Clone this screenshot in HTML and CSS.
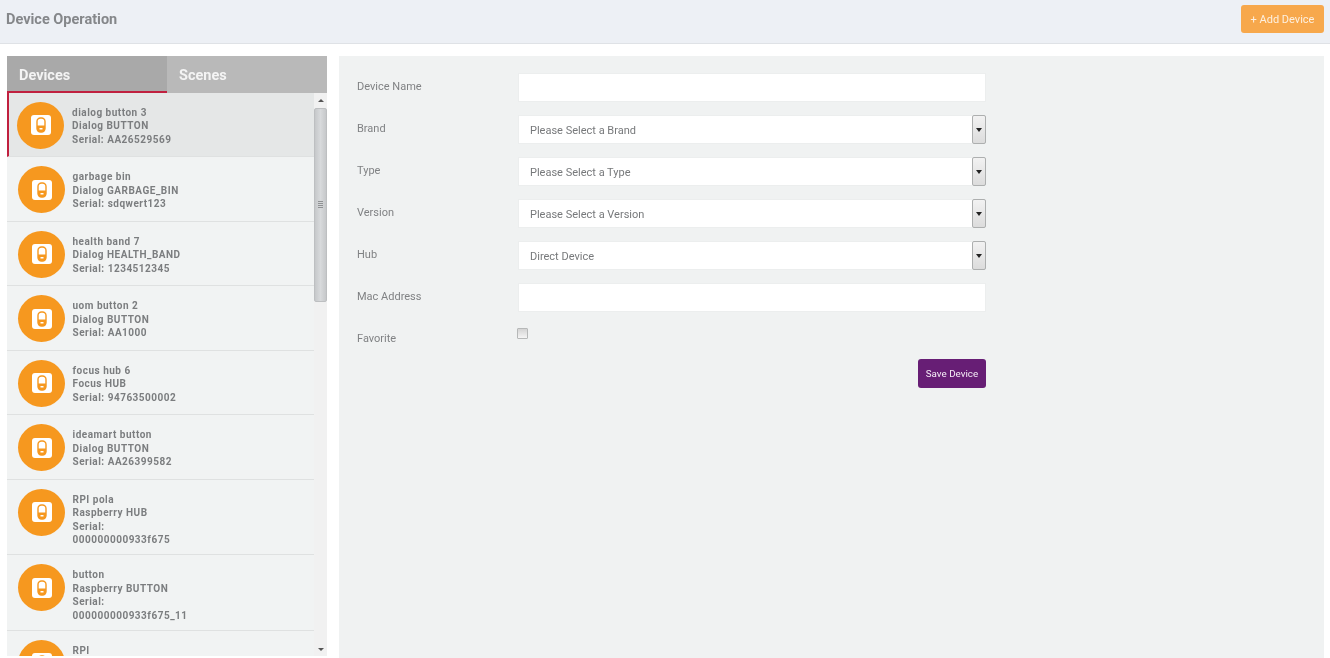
FILE: index.html
```html
<!DOCTYPE html>
<html lang="en">
<head>
<meta charset="utf-8">
<title>Device Operation</title>
<link rel="stylesheet" href="styles.css">
</head>
<body>
<header class="topbar">
  <h1 class="title">Device Operation</h1>
  <button class="add-btn" type="button">+ Add Device</button>
</header>
<main class="content">
  <section class="side">
    <div class="tabs">
      <div class="tab tab-active">Devices</div>
      <div class="tab">Scenes</div>
    </div>
    <div class="list-wrap">
      <ul class="list">
        <li class="item item-active"><span class="avatar"><svg class="ico" viewBox="0 0 20 20"><rect width="20" height="20" rx="3" fill="#fff"/><rect x="6" y="3" width="8" height="14" rx="3.5" fill="none" stroke="#f6981f" stroke-width="1.4"/><path d="M6 10.5h8V14a3 3 0 0 1-3 3H9a3 3 0 0 1-3-3z" fill="#f6981f"/><rect x="8.5" y="13" width="3" height="1.5" fill="#fff"/></svg></span><div class="info"><div>dialog button 3</div><div>Dialog BUTTON</div><div>Serial: AA26529569</div></div></li>
        <li class="item"><span class="avatar"><svg class="ico" viewBox="0 0 20 20"><rect width="20" height="20" rx="3" fill="#fff"/><rect x="6" y="3" width="8" height="14" rx="3.5" fill="none" stroke="#f6981f" stroke-width="1.4"/><path d="M6 10.5h8V14a3 3 0 0 1-3 3H9a3 3 0 0 1-3-3z" fill="#f6981f"/><rect x="8.5" y="13" width="3" height="1.5" fill="#fff"/></svg></span><div class="info"><div>garbage bin</div><div>Dialog GARBAGE_BIN</div><div>Serial: sdqwert123</div></div></li>
        <li class="item"><span class="avatar"><svg class="ico" viewBox="0 0 20 20"><rect width="20" height="20" rx="3" fill="#fff"/><rect x="6" y="3" width="8" height="14" rx="3.5" fill="none" stroke="#f6981f" stroke-width="1.4"/><path d="M6 10.5h8V14a3 3 0 0 1-3 3H9a3 3 0 0 1-3-3z" fill="#f6981f"/><rect x="8.5" y="13" width="3" height="1.5" fill="#fff"/></svg></span><div class="info"><div>health band 7</div><div>Dialog HEALTH_BAND</div><div>Serial: 1234512345</div></div></li>
        <li class="item"><span class="avatar"><svg class="ico" viewBox="0 0 20 20"><rect width="20" height="20" rx="3" fill="#fff"/><rect x="6" y="3" width="8" height="14" rx="3.5" fill="none" stroke="#f6981f" stroke-width="1.4"/><path d="M6 10.5h8V14a3 3 0 0 1-3 3H9a3 3 0 0 1-3-3z" fill="#f6981f"/><rect x="8.5" y="13" width="3" height="1.5" fill="#fff"/></svg></span><div class="info"><div>uom button 2</div><div>Dialog BUTTON</div><div>Serial: AA1000</div></div></li>
        <li class="item"><span class="avatar"><svg class="ico" viewBox="0 0 20 20"><rect width="20" height="20" rx="3" fill="#fff"/><rect x="6" y="3" width="8" height="14" rx="3.5" fill="none" stroke="#f6981f" stroke-width="1.4"/><path d="M6 10.5h8V14a3 3 0 0 1-3 3H9a3 3 0 0 1-3-3z" fill="#f6981f"/><rect x="8.5" y="13" width="3" height="1.5" fill="#fff"/></svg></span><div class="info"><div>focus hub 6</div><div>Focus HUB</div><div>Serial: 94763500002</div></div></li>
        <li class="item"><span class="avatar"><svg class="ico" viewBox="0 0 20 20"><rect width="20" height="20" rx="3" fill="#fff"/><rect x="6" y="3" width="8" height="14" rx="3.5" fill="none" stroke="#f6981f" stroke-width="1.4"/><path d="M6 10.5h8V14a3 3 0 0 1-3 3H9a3 3 0 0 1-3-3z" fill="#f6981f"/><rect x="8.5" y="13" width="3" height="1.5" fill="#fff"/></svg></span><div class="info"><div>ideamart button</div><div>Dialog BUTTON</div><div>Serial: AA26399582</div></div></li>
        <li class="item"><span class="avatar"><svg class="ico" viewBox="0 0 20 20"><rect width="20" height="20" rx="3" fill="#fff"/><rect x="6" y="3" width="8" height="14" rx="3.5" fill="none" stroke="#f6981f" stroke-width="1.4"/><path d="M6 10.5h8V14a3 3 0 0 1-3 3H9a3 3 0 0 1-3-3z" fill="#f6981f"/><rect x="8.5" y="13" width="3" height="1.5" fill="#fff"/></svg></span><div class="info"><div>RPI pola</div><div>Raspberry HUB</div><div>Serial:</div><div>000000000933f675</div></div></li>
        <li class="item"><span class="avatar"><svg class="ico" viewBox="0 0 20 20"><rect width="20" height="20" rx="3" fill="#fff"/><rect x="6" y="3" width="8" height="14" rx="3.5" fill="none" stroke="#f6981f" stroke-width="1.4"/><path d="M6 10.5h8V14a3 3 0 0 1-3 3H9a3 3 0 0 1-3-3z" fill="#f6981f"/><rect x="8.5" y="13" width="3" height="1.5" fill="#fff"/></svg></span><div class="info"><div>button</div><div>Raspberry BUTTON</div><div>Serial:</div><div>000000000933f675_11</div></div></li>
        <li class="item"><span class="avatar"><svg class="ico" viewBox="0 0 20 20"><rect width="20" height="20" rx="3" fill="#fff"/><rect x="6" y="3" width="8" height="14" rx="3.5" fill="none" stroke="#f6981f" stroke-width="1.4"/><path d="M6 10.5h8V14a3 3 0 0 1-3 3H9a3 3 0 0 1-3-3z" fill="#f6981f"/><rect x="8.5" y="13" width="3" height="1.5" fill="#fff"/></svg></span><div class="info"><div>RPI</div></div></li>
      </ul>
      <div class="scroll">
        <span class="arrow-up"></span>
        <div class="thumb"><span class="grip"></span></div>
        <span class="spacer"></span>
        <span class="arrow-down"></span>
      </div>
    </div>
  </section>
  <section class="panel">
    <form class="form">
      <div class="row"><span class="label">Device Name</span><div class="field"></div></div>
      <div class="row"><span class="label">Brand</span><div class="select"><span class="field-text">Please Select a Brand</span><span class="drop"><i class="caret"></i></span></div></div>
      <div class="row"><span class="label">Type</span><div class="select"><span class="field-text">Please Select a Type</span><span class="drop"><i class="caret"></i></span></div></div>
      <div class="row"><span class="label">Version</span><div class="select"><span class="field-text">Please Select a Version</span><span class="drop"><i class="caret"></i></span></div></div>
      <div class="row"><span class="label">Hub</span><div class="select"><span class="field-text">Direct Device</span><span class="drop"><i class="caret"></i></span></div></div>
      <div class="row"><span class="label">Mac Address</span><div class="field"></div></div>
      <div class="row"><span class="label">Favorite</span><span class="check"></span></div>
      <div class="actions"><button class="save-btn" type="button">Save Device</button></div>
    </form>
  </section>
</main>
</body>
</html>
```
FILE: styles.css
```css
* { box-sizing: border-box; }
html, body { margin: 0; height: 658px; overflow: hidden; }
body { background: #fff; font-family: Roboto, "Liberation Sans", sans-serif; color: #77797b; filter: blur(0.35px); }

.topbar {
  height: 44px;
  background: #edf0f5;
  border-bottom: 1px solid #dfe2e6;
  display: flex;
  align-items: flex-start;
  justify-content: space-between;
  padding: 5px 6px 0 6px;
}
.title { margin: 6.5px 0 0; font-size: 14.5px; line-height: 16px; font-weight: 700; color: #85878a; }
.add-btn {
  width: 83px; height: 28px;
  border: 0; border-radius: 3px;
  background: #f7a84c; color: #fdf0e0;
  font: 400 11px Roboto, sans-serif;
  padding: 0;
}

.content {
  display: flex;
  align-items: flex-start;
  gap: 12px;
  padding: 12px 6px 0 7px;
  height: 614px;
}

.side { width: 320px; height: 600px; display: flex; flex-direction: column; background: #f1f3f3; }
.tabs { display: flex; height: 36.5px; flex: none; background: #b9b9b9; }
.tab { width: 160px; padding: 10.5px 12px 0; font-size: 14.5px; line-height: 17px; font-weight: 700; color: #f4f4f4; }
.tab-active { background: #a9a9a9; border-bottom: 2px solid #c0203f; }

.list-wrap { flex: 1; min-height: 0; display: flex; }
.list { list-style: none; margin: 0; padding: 0; width: 307px; overflow: hidden; flex: none; }
.item {
  display: flex; align-items: flex-start; gap: 7.5px;
  padding: 9px 8px 7.5px 11px;
  min-height: 64.5px;
  border-bottom: 1px solid #dfe1e1;
}
.item-active { background: #e5e7e7; border-left: 2px solid #c0203f; padding-left: 8px; gap: 8px; }
.avatar {
  width: 47px; height: 47px; flex: none;
  border-radius: 50%; background: #f6981f;
  display: flex; align-items: center; justify-content: center;
}
.ico { width: 20px; height: 20px; display: block; }
.info { margin-top: 4px; font-size: 10px; line-height: 13.5px; font-weight: 700; letter-spacing: 0.5px; color: #7b7d7f; }

.scroll { width: 13px; flex: none; display: flex; flex-direction: column; align-items: center; background: #f1f1f1; }
.arrow-up { width: 0; height: 0; margin: 6px 0 6px; border: 3px solid transparent; border-top: 0; border-bottom: 3px solid #555; flex: none; }
.thumb {
  width: 13px; height: 194px; flex: none;
  background: linear-gradient(90deg, #c6c8ca, #d8dadc 50%, #c6c8ca);
  border: 1px solid #bdbfc1; border-radius: 2px;
  display: flex; align-items: center; justify-content: center;
}
.grip { width: 5px; height: 7px; background: repeating-linear-gradient(180deg, #8f9193 0 1px, transparent 1px 2px); }
.spacer { flex: 1; }
.arrow-down { width: 0; height: 0; margin-bottom: 5px; border: 3px solid transparent; border-bottom: 0; border-top: 3px solid #555; flex: none; }

.panel { width: 985px; height: 602px; background: #f0f2f2; padding: 17px 18px; }
.form { width: 629px; display: flex; flex-direction: column; gap: 13px; }
.row { display: flex; align-items: flex-start; height: 29px; }
.label { width: 161px; flex: none; font-size: 11px; line-height: 14px; padding-top: 6.5px; color: #808284; }
.field { width: 468px; height: 29px; background: #fff; border: 1px solid #eceeee; }
.select { width: 468px; height: 29px; background: #fff; border: 1px solid #eceeee; display: flex; align-items: center; justify-content: space-between; padding-left: 11px; }
.field-text { font-size: 11px; padding-top: 1px; color: #77797b; }
.drop {
  width: 14px; height: 29px; margin-right: -1px; flex: none;
  background: linear-gradient(180deg, #f2f2f2, #dcdcdc);
  border: 1px solid #adafaf; border-radius: 2px;
  display: flex; align-items: center; justify-content: center;
}
.caret { width: 0; height: 0; border: 3px solid transparent; border-bottom: 0; border-top: 4px solid #222; }
.check { width: 11px; height: 11px; margin: 3px 0 0 -1px; border: 1px solid #b6b8b8; border-radius: 1px; background: linear-gradient(180deg, #d4d4d4, #f5f5f5); }
.actions { display: flex; justify-content: flex-end; margin-top: -8px; }
.save-btn {
  width: 68px; height: 29px; border: 0; border-radius: 3px;
  background: #671e75; color: #f6eef7;
  font: 400 9.8px Roboto, sans-serif; padding: 0;
}
```
